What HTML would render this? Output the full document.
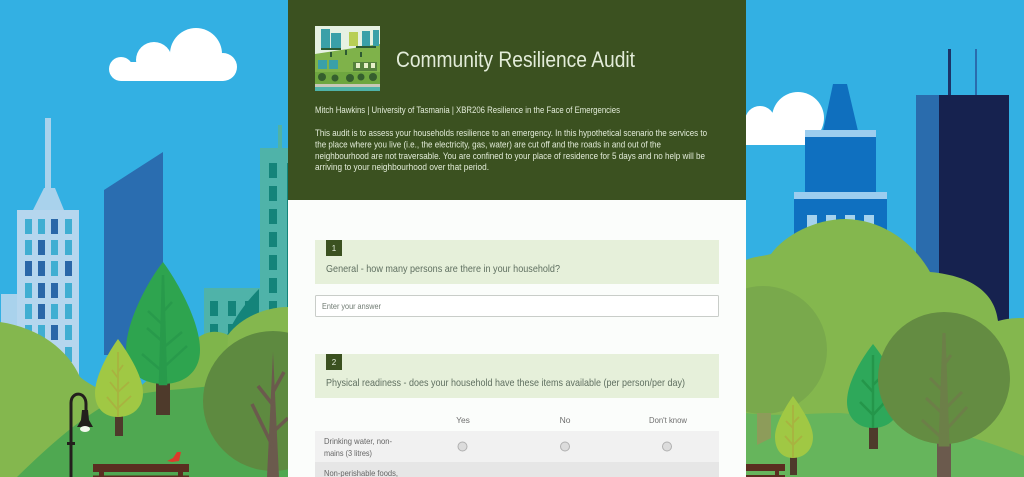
<!DOCTYPE html>
<html><head><meta charset="utf-8"><title>Community Resilience Audit</title>
<style>html,body{margin:0;padding:0;background:#33b0e3;overflow:hidden}svg{display:block}
text{font-family:"Liberation Sans",sans-serif}</style></head>
<body>
<svg width="1024" height="477" viewBox="0 0 1024 477" xmlns="http://www.w3.org/2000/svg">
<rect width="1024" height="477" fill="#33b0e3"/>
<!-- left cloud -->
<g fill="#fff"><circle cx="121" cy="69" r="12"/><circle cx="154" cy="60" r="18"/><circle cx="196" cy="54" r="26"/><circle cx="223" cy="67" r="14"/><rect x="121" y="62" width="102" height="19"/></g>
<!-- left buildings -->
<path d="M45 118h6v70h-6z" fill="#a9d2ec"/>
<path d="M44 188h11l9 22H33z" fill="#a9d2ec"/>
<rect x="1" y="294" width="20" height="90" fill="#a9d2ec"/>
<rect x="17" y="210" width="62" height="175" fill="#b5d6ee"/>
<g fill="#40aed2">
<rect x="25" y="219" width="7" height="15"/><rect x="38" y="219" width="7" height="15"/><rect x="65" y="219" width="7" height="15"/>
<rect x="25" y="240" width="7" height="15"/><rect x="51" y="240" width="7" height="15"/><rect x="65" y="240" width="7" height="15"/>
<rect x="51" y="261" width="7" height="15"/><rect x="25" y="283" width="7" height="15"/><rect x="65" y="283" width="7" height="15"/>
<rect x="25" y="304" width="7" height="15"/><rect x="51" y="304" width="7" height="15"/><rect x="65" y="304" width="7" height="15"/>
<rect x="25" y="325" width="7" height="15"/><rect x="38" y="325" width="7" height="15"/><rect x="65" y="325" width="7" height="15"/>
<rect x="65" y="347" width="7" height="15"/></g>
<g fill="#2a67a8">
<rect x="51" y="219" width="7" height="15"/><rect x="38" y="240" width="7" height="15"/>
<rect x="25" y="261" width="7" height="15"/><rect x="38" y="261" width="7" height="15"/><rect x="65" y="261" width="7" height="15"/>
<rect x="38" y="283" width="7" height="15"/><rect x="51" y="283" width="7" height="15"/>
<rect x="38" y="304" width="7" height="15"/><rect x="51" y="325" width="7" height="15"/></g>
<path d="M104 190L163 152V355H104z" fill="#2a6db0"/>
<rect x="278" y="125" width="4" height="25" fill="#4fb3a6"/>
<rect x="260" y="148" width="28" height="170" fill="#4fb3a9"/>
<g fill="#14847a"><rect x="269" y="163" width="8" height="15"/><rect x="269" y="186" width="8" height="15"/><rect x="269" y="209" width="8" height="15"/><rect x="269" y="232" width="8" height="15"/><rect x="269" y="255" width="8" height="15"/><rect x="269" y="278" width="8" height="15"/><rect x="269" y="301" width="8" height="15"/>
<rect x="287" y="163" width="1" height="150"/></g>
<rect x="204" y="288" width="56" height="50" fill="#4fb3a9"/>
<g fill="#14847a"><rect x="210" y="301" width="8" height="15"/><rect x="228" y="301" width="8" height="15"/><rect x="245" y="301" width="8" height="15"/><rect x="210" y="324" width="8" height="10"/><rect x="228" y="324" width="8" height="10"/></g>
<path d="M227 335C236 315 248 300 259 289V320L240 330z" fill="#14847a"/>
<!-- left hills -->
<path d="M195 340C206 330 218 330 228 335L300 340V477H130V395z" fill="#7fb54b"/>
<path d="M228 335C240 318 265 307 288 307V400H225z" fill="#84b74e"/>
<path d="M0 322C40 328 68 350 80 377C86 382 92 385 97 388L130 395V477H0z" fill="#84b74e"/>
<path d="M17 477C50 445 75 423 105 405C125 395 150 392 170 390C220 386 260 380 288 372V477z" fill="#4fa851"/>
<!-- big tree -->
<rect x="156" y="380" width="14" height="35" fill="#4e3a2b"/>
<path d="M163 262C175 278 200 320 200 350C200 372 184 384 163 384C142 384 126 372 126 350C126 320 150 278 163 262z" fill="#2ea44f"/>
<path d="M163 275L166 384H160zM163 325L148 311M163 312L172 302M163 342L147 328M163 348L182 332M163 372L142 354M163 368L187 346" stroke="#289a4b" stroke-width="2.500" fill="#289a4b"/>
<!-- small yellow tree -->
<rect x="115" y="414" width="8" height="22" fill="#4e3a2b"/>
<path d="M118 339C126 350 143 375 143 393C143 408 132 417 118 417C104 417 95 408 95 393C95 375 110 350 118 339z" fill="#a0c844"/>
<path d="M118 352V417M118 378L112 370M118 372L123 365M118 392L110 382M118 392L129 382M118 410L107 397M118 408L131 396" stroke="#a8b340" stroke-width="1.800" fill="none"/>
<!-- lamp -->
<path d="M71 477V403C71 391 86 391 86 404V411" stroke="#231f1d" stroke-width="3" fill="none"/>
<path d="M67 442h8v3h-8z" fill="#231f1d"/>
<path d="M82 410h6l1 10l4 7H77l4-7z" fill="#231f1d"/>
<ellipse cx="85" cy="429" rx="5" ry="3" fill="#f3f7ee"/>
<!-- bench, bird -->
<rect x="93" y="464" width="96" height="8" fill="#5a2e20"/><rect x="93" y="475.500" width="96" height="1.500" fill="#5a2e20"/>
<rect x="99" y="471" width="5" height="6" fill="#5a2e20"/><rect x="178" y="471" width="5" height="6" fill="#5a2e20"/>
<path d="M167 461L173 458L177 452L181 452L179 461L172 462z" fill="#dd3b2a"/>
<!-- front-left tree -->
<circle cx="273" cy="401" r="70" fill="#5e8a40"/>
<path d="M273 352L279 477H267z" fill="#6b5a4d"/>
<path d="M273 405L258 386M273 392L284 372M273 447L252 404M273 432L288 418" stroke="#6b5a4d" stroke-width="3.500" fill="none"/>

<!-- right cloud -->
<g fill="#fff"><circle cx="760" cy="121" r="15"/><circle cx="798" cy="118" r="26"/><rect x="746" y="118" width="70" height="27"/></g>
<!-- blue tower -->
<path d="M833 84h14l11 47h-35z" fill="#0f6fbe"/>
<rect x="805" y="130" width="71" height="8" fill="#9ccdef"/>
<rect x="805" y="137" width="71" height="56" fill="#0f70c0"/>
<rect x="794" y="192" width="93" height="8" fill="#9ccdef"/>
<rect x="794" y="199" width="93" height="50" fill="#0f70c0"/>
<g fill="#a5d2ee"><rect x="807" y="215" width="10" height="15"/><rect x="826" y="215" width="10" height="15"/><rect x="845" y="215" width="10" height="15"/><rect x="864" y="215" width="10" height="15"/></g>
<!-- dark tower -->
<rect x="948" y="49" width="3" height="47" fill="#1c3468"/><rect x="975" y="49" width="2" height="47" fill="#2a6cad"/>
<rect x="916" y="95" width="24" height="200" fill="#2a6cad"/>
<rect x="939" y="95" width="70" height="240" fill="#16224f"/>
<!-- right hill -->
<path d="M746 260C755 256 765 256 771 254C785 235 815 219 846 219C885 220 915 245 930 272C975 276 995 295 998 321C1008 318 1016 318 1024 318V477H746z" fill="#84b74e"/>
<circle cx="763" cy="350" r="64" fill="#79a94c"/>
<path d="M746 413C780 417 810 413 840 413C900 418 960 430 1024 456V477H746z" fill="#66b55c"/>
<path d="M757 413h14v25l-14 7z" fill="#8d9c5a"/>
<!-- mid green tree -->
<rect x="869" y="425" width="9" height="24" fill="#4e3a2b"/>
<path d="M873 344C884 358 900 382 900 402C900 418 888 428 873 428C858 428 847 418 847 402C847 382 862 358 873 344z" fill="#2ea85a"/>
<path d="M873 355V428M873 392L862 380M873 385L880 378M873 415L860 402M873 415L885 402" stroke="#24964a" stroke-width="2.500" fill="none"/>
<!-- yellow tree right -->
<rect x="790" y="455" width="7" height="20" fill="#4e3a2b"/>
<path d="M793 396C800 406 813 424 813 437C813 450 804 458 793 458C782 458 775 450 775 437C775 424 786 406 793 396z" fill="#a0c844"/>
<path d="M793 405V458M793 428L786 421M793 423L799 417M793 445L785 436M793 445L802 436" stroke="#a8b340" stroke-width="1.800" fill="none"/>
<!-- big right tree -->
<rect x="937" y="442" width="14" height="35" fill="#6b5a4d"/>
<circle cx="944" cy="378" r="66" fill="#648c42"/>
<path d="M944 333L948 445H940zM944 392L930 378M944 365L951 355M944 415L926 398M944 410L962 392M944 440L922 420M944 432L967 407" stroke="#6c7f48" stroke-width="3" fill="#6c7f48"/>
<!-- bench right -->
<rect x="746" y="464" width="39" height="7" fill="#5a2e20"/><rect x="746" y="475" width="39" height="2" fill="#5a2e20"/><rect x="775" y="470" width="4" height="7" fill="#5a2e20"/>

<!-- panel -->
<rect x="288" y="0" width="458" height="200" fill="#3b5120"/>
<rect x="288" y="200" width="458" height="277" fill="#fbfdfb"/>
<!-- logo -->
<rect x="315" y="26" width="65" height="65" fill="#e6f1e2"/>
<path d="M315 54L380 44V91H315z" fill="#7fb24a"/>
<g fill="#3aa0a8"><rect x="321" y="29" width="9" height="19"/><rect x="331" y="33" width="10" height="15"/><rect x="362" y="31" width="8" height="16"/><rect x="373" y="30" width="6" height="16"/><rect x="318" y="60" width="9" height="9"/><rect x="329" y="60" width="9" height="9"/></g>
<rect x="349" y="32" width="9" height="14" fill="#b8cf55"/>
<g fill="#2d5a32"><rect x="321" y="48" width="20" height="2"/><rect x="356" y="46" width="20" height="2"/><rect x="330" y="52" width="2" height="5"/><rect x="345" y="50" width="2" height="5"/><rect x="360" y="52" width="2" height="5"/></g>
<path d="M353 62h24v9h-24z" fill="#55813c"/><path d="M356 63h4v5h-4zM364 63h4v5h-4zM371 63h4v5h-4z" fill="#e7efc8"/>
<rect x="315" y="72" width="65" height="14" fill="#6ea63f"/>
<g fill="#355f2e"><circle cx="322" cy="77" r="4"/><circle cx="335" cy="78" r="3.500"/><circle cx="350" cy="78" r="4"/><circle cx="361" cy="77" r="3.500"/><circle cx="373" cy="77" r="4"/></g>
<rect x="315" y="84" width="65" height="3" fill="#c8c8b8"/><rect x="315" y="87" width="65" height="4" fill="#4fb3a9"/>
<!-- header text -->
<text x="396" y="67" font-size="22" fill="#e3ecd9" textLength="239" lengthAdjust="spacingAndGlyphs">Community Resilience Audit</text>
<g font-size="8.800" fill="#e3ecd9">
<text x="315" y="113" textLength="305" lengthAdjust="spacingAndGlyphs">Mitch Hawkins | University of Tasmania | XBR206 Resilience in the Face of Emergencies</text>
<text x="315" y="136" textLength="392" lengthAdjust="spacingAndGlyphs">This audit is to assess your households resilience to an emergency. In this hypothetical scenario the services to</text>
<text x="315" y="147.500" textLength="346" lengthAdjust="spacingAndGlyphs">the place where you live (i.e., the electricity, gas, water) are cut off and the roads in and out of the</text>
<text x="315" y="159" textLength="390" lengthAdjust="spacingAndGlyphs">neighbourhood are not traversable. You are confined to your place of residence for 5 days and no help will be</text>
<text x="315" y="170" textLength="174" lengthAdjust="spacingAndGlyphs">arriving to your neighbourhood over that period.</text>
</g>
<!-- Q1 -->
<rect x="315" y="240" width="404" height="44" fill="#e6f0da"/>
<rect x="326" y="240" width="16" height="16" fill="#3b5120"/>
<text x="334" y="251" font-size="8" fill="#e6efdf" text-anchor="middle">1</text>
<text x="326" y="272" font-size="10.500" fill="#5f6f60" textLength="234" lengthAdjust="spacingAndGlyphs">General - how many persons are there in your household?</text>
<rect x="315.500" y="295.500" width="403" height="21" rx="1" fill="#fff" stroke="#c9cdc9"/>
<text x="322" y="309" font-size="8.500" fill="#6f7a72" textLength="59" lengthAdjust="spacingAndGlyphs">Enter your answer</text>
<!-- Q2 -->
<rect x="315" y="354" width="404" height="44" fill="#e6f0da"/>
<rect x="326" y="354" width="16" height="16" fill="#3b5120"/>
<text x="334" y="365" font-size="8" fill="#e6efdf" text-anchor="middle">2</text>
<text x="326" y="386" font-size="10.500" fill="#5f6f60" textLength="359" lengthAdjust="spacingAndGlyphs">Physical readiness - does your household have these items available (per person/per day)</text>
<!-- table -->
<g font-size="8.500" fill="#6f6f6f">
<text x="463" y="423" text-anchor="middle">Yes</text>
<text x="565" y="423" text-anchor="middle">No</text>
<text x="649" y="423" textLength="38" lengthAdjust="spacingAndGlyphs">Don't know</text>
</g>
<rect x="315" y="431" width="404" height="31" fill="#f1f1f1"/>
<rect x="315" y="462" width="404" height="15" fill="#e6e6e6"/>
<g font-size="8.500" fill="#666">
<text x="324" y="444" textLength="68" lengthAdjust="spacingAndGlyphs">Drinking water, non-</text>
<text x="324" y="456" textLength="48" lengthAdjust="spacingAndGlyphs">mains (3 litres)</text>
<text x="324" y="476" textLength="74" lengthAdjust="spacingAndGlyphs">Non-perishable foods,</text>
</g>
<g fill="#dcdcdc" stroke="#b0b0b0"><circle cx="462.500" cy="446.500" r="4.500"/><circle cx="565" cy="446.500" r="4.500"/><circle cx="667" cy="446.500" r="4.500"/></g>
</svg>
</body></html>
